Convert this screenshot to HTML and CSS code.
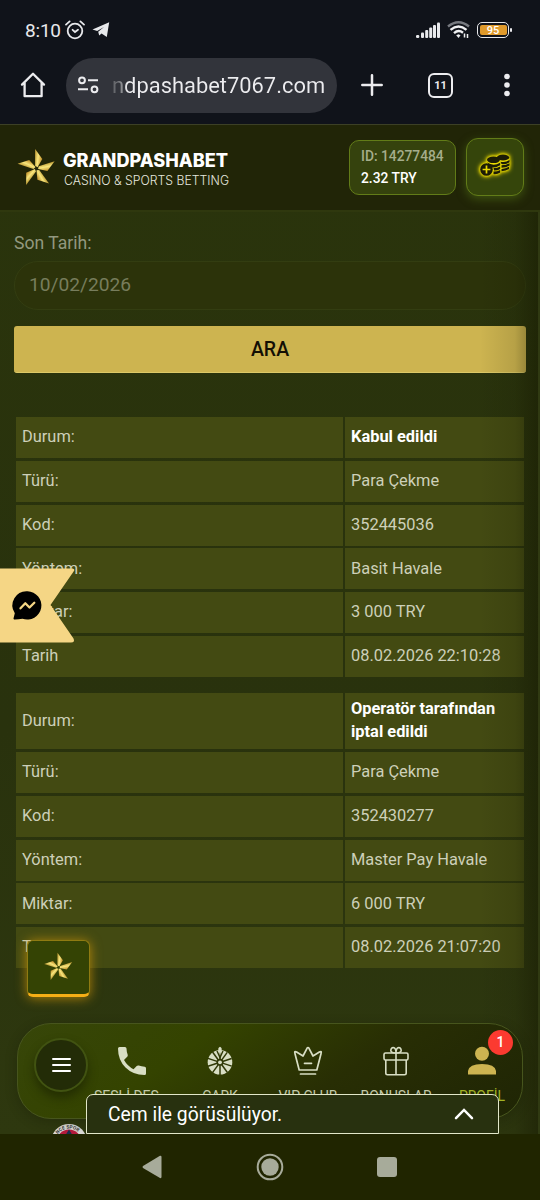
FILE: index.html
```html
<!DOCTYPE html>
<html lang="tr">
<head>
<meta charset="utf-8">
<title>Grandpashabet</title>
<link rel="stylesheet" href="styles.css">
</head>
<body>
<svg class="defs" width="0" height="0" aria-hidden="true">
  <defs>
    <linearGradient id="gold" x1="0" y1="0" x2="1" y2="0.3"><stop offset="0" stop-color="#b8952f"/><stop offset=".5" stop-color="#f8e67c"/><stop offset="1" stop-color="#c4962f"/></linearGradient>
    <path id="petal" d="M-4-57 17-28 3-4-4-8z"/>
    <symbol id="star" viewBox="-60 -60 120 120">
      <g fill="url(#gold)"><use href="#petal"/><use href="#petal" transform="rotate(72)"/><use href="#petal" transform="rotate(144)"/><use href="#petal" transform="rotate(216)"/><use href="#petal" transform="rotate(288)"/></g>
    </symbol>
  </defs>
</svg>
<div class="phone">
  <div class="status">
    <span class="clock">8:10</span>
    <svg class="alarm" width="20" height="20" viewBox="0 0 20 20" fill="none" stroke="#e8e9ec" stroke-width="1.8" stroke-linecap="round"><circle cx="10" cy="11" r="7.3"/><path d="M7.6 9.8 10 12l3-2.2M1 4.6 4.6 1.4M19 4.6l-3.6-3.2"/></svg>
    <svg class="plane" width="18" height="16" viewBox="0 0 18 16" fill="#e8e9ec"><path d="M.5 7.4 17.2.2 14.8 15 9.6 11.4 7.2 13.6 6.2 9.8 12 5.1 5.2 9z"/></svg>
    <span class="grow"></span>
    <svg width="25" height="17" viewBox="0 0 25 17" fill="#e8e9ec"><rect x="0" y="13" width="3.3" height="3" rx="1.2"/><rect x="5" y="10.5" width="3" height="5.5" rx="1"/><rect x="9.2" y="8" width="3" height="8" rx="1"/><rect x="13.2" y="5.5" width="3" height="10.5" rx="1"/><rect x="17" y="3" width="3" height="13" rx="1"/><rect x="21" y=".5" width="3" height="15.5" rx="1"/></svg>
    <svg class="wifi" width="23" height="18" viewBox="0 0 23 18" fill="none" stroke="#f0f1f3" stroke-width="2.4"><path d="M1 5.5Q11.5-3 22 5.5" stroke="#777a80"/><path d="M3.5 8.8Q11.5 2 19.5 8.8M7 12.2Q11.5 8.2 16 11.8"/><path d="M9.2 14.3 11.5 17 13.5 14.3 11.5 13.2z" fill="#f0f1f3" stroke="none"/><path d="M17.5 12.5v4M20.5 13v4" stroke-width="1.5"/></svg>
    <span class="battery"><span>95</span></span>
  </div>
  <div class="browser">
    <svg class="home" width="26" height="26" viewBox="0 0 26 26" fill="none" stroke="#ececef" stroke-width="2.3" stroke-linejoin="round" stroke-linecap="round"><path d="M2 12.6 13 1.7 24 12.6M4.6 11v13.2h17V11"/></svg>
    <div class="url">
      <svg width="21" height="18" viewBox="0 0 21 18" fill="none" stroke="#ececef" stroke-width="2"><circle cx="4" cy="4.3" r="2.9"/><circle cx="16.5" cy="13.3" r="2.9"/><path d="M10 4.3h10M0 13.3h10"/></svg>
      <span class="address">ndpashabet7067.com</span>
    </div>
    <svg class="plus" width="22" height="22" viewBox="0 0 22 22" stroke="#ececef" stroke-width="2.5" stroke-linecap="round"><path d="M11 1.3v19.4M1.3 11h19.4"/></svg>
    <span class="tabs">11</span>
    <svg class="dots" width="6" height="24" viewBox="0 0 6 24" fill="#ececef"><circle cx="3" cy="3.5" r="2.8"/><circle cx="3" cy="12" r="2.8"/><circle cx="3" cy="20.5" r="2.8"/></svg>
  </div>

  <div class="page">
    <header class="header">
      <svg class="logo-star"><use href="#star"/></svg>
      <svg class="wordmark" width="170" height="44" viewBox="0 0 170 44"><text class="brand" x="0" y="20" textLength="165" lengthAdjust="spacingAndGlyphs">GRANDPASHABET</text><text class="tagline" x="1" y="37.5" textLength="165" lengthAdjust="spacingAndGlyphs">CASINO &amp; SPORTS BETTING</text></svg>
      <div class="account"><span class="account-id">ID: 14277484</span><span>2.32 TRY</span></div>
      <div class="deposit">
        <svg width="40" height="32" viewBox="0 0 40 32">
          <g class="coins">
            <ellipse cx="29" cy="7.5" rx="6.2" ry="3"/><path d="M26.5 11.7Q31 13 35.5 10v2.3Q32 15 27.5 14zM27.5 15.3q4.5 0 8-2v2.3q-3 2.2-8 2.2zM27.5 19q4-.3 7.5-2.2v2.2q-3 2-7.5 2.3z"/>
            <ellipse cx="19.5" cy="9.8" rx="6.5" ry="3.3"/><path d="M13 12.3q6 4.5 13.2.5v2.4q-5 3-9 2zM19.5 18q4 0 6.7-1.5v2.4q-2.7 1.7-6.2 1.5zM19.5 21.6q4 0 6.7-1.5v2.4q-2.7 2-6.7 1.6z"/>
            <circle cx="12.5" cy="19.5" r="6.3"/>
          </g>
          <path d="M12.5 15.6v7.8M8.6 19.5h7.8" stroke="#e9d800" stroke-width="1.7"/>
        </svg>
      </div>
    </header>

    <main class="content">
      <label class="label">Son Tarih:</label>
      <div class="date">10/02/2026</div>
      <button class="search">ARA</button>
      <div class="record">
        <span>Durum:</span><b>Kabul edildi</b>
        <span>Türü:</span><span>Para Çekme</span>
        <span>Kod:</span><span>352445036</span>
        <span>Yöntem:</span><span>Basit Havale</span>
        <span>Miktar:</span><span>3 000 TRY</span>
        <span>Tarih</span><span>08.02.2026 22:10:28</span>
      </div>
      <div class="record second">
        <span>Durum:</span><b>Operatör tarafından iptal edildi</b>
        <span>Türü:</span><span>Para Çekme</span>
        <span>Kod:</span><span>352430277</span>
        <span>Yöntem:</span><span>Master Pay Havale</span>
        <span>Miktar:</span><span>6 000 TRY</span>
        <span>Tarih</span><span>08.02.2026 21:07:20</span>
      </div>
    </main>
    <div class="edge"></div>

    <svg class="messenger" width="76" height="75" viewBox="0 0 76 75"><path d="M0 .5H72.5Q75.5 1 73.6 3.5L50.5 37 73.5 70.5Q75.3 74.5 71 74.5H0z" fill="#f5d685"/><path d="M27.5 23.2a14.2 14.2 0 1 1-5 27.6Q18 51.5 14 51.4q-1-.6-.2-2.2l1-4A14.2 14.2 0 0 1 27.5 23.2z"/><path d="M20.5 40.3 25.3 35.3 29.5 39.5 34.3 34.8" fill="none" stroke="#f5d685" stroke-width="2.3" stroke-linecap="round" stroke-linejoin="round"/></svg>

    <div class="float"><svg><use href="#star"/></svg></div>

    <svg class="club" width="36" height="36" viewBox="0 0 36 36"><circle cx="18" cy="18" r="18" fill="#d9d9d4"/><circle cx="18" cy="18" r="12.5" fill="#b61b3c"/><path d="M14 12 18 5.5 22 12z" fill="#172e50"/><path id="ring" d="M4.500 18a13.500 13.500 0 0 1 27 0" fill="none"/><text class="club-text"><textPath href="#ring" startOffset="8">NCE SPOR</textPath></text></svg>

    <nav class="nav">
      <div class="menu"><i></i><i></i><i></i></div>
      <div class="item"><svg width="30" height="30" viewBox="0 0 30 30" fill="#d8dec4"><path d="M1 2.5Q1 1 2.5 1H8Q9.4 1 9.5 2.5 9.6 6 10.7 8.7 11 10 10.2 10.8L7 14.1Q10.7 20.5 16.5 23.2L19.7 20Q20.5 19.3 21.7 19.6 24.5 20.6 27.7 20.7 29 20.8 29 22.2V27.5Q29 29 27.5 29 16 29 8.5 21.5 1 14 1 2.5z"/></svg><span>SESLİ DES...</span></div>
      <div class="item"><svg width="30" height="30" viewBox="0 0 30 30"><circle cx="15" cy="16.3" r="12.3" fill="#d8dec4"/><g stroke="#303907" stroke-width="1.5"><path d="M15 4v25"/><path d="M15 4v25" transform="rotate(36 15 16.3)"/><path d="M15 4v25" transform="rotate(72 15 16.3)"/><path d="M15 4v25" transform="rotate(108 15 16.3)"/><path d="M15 4v25" transform="rotate(144 15 16.3)"/></g><circle cx="15" cy="16.3" r="3.5" fill="#303907"/><circle cx="15" cy="16.3" r="1.9" fill="#d8dec4"/><path d="M12 5 15 11.500 18 5" fill="none" stroke="#303907" stroke-width="1.4"/><path d="M15 .7q2.500 1 1.400 4L15 9.500 13.600 4.700q-1.100-3 1.400-4z" fill="#d8dec4"/></svg><span>ÇARK</span></div>
      <div class="item"><svg width="30" height="30" viewBox="0 0 30 30" fill="none" stroke="#d8dec4" stroke-width="1.7" stroke-linejoin="round" stroke-linecap="round"><path d="M6.200 24 2 7.700Q1 4.500 3.600 6L10 10 14 2.300Q15 .7 16 2.300L20 10 26.400 6Q29 4.500 28 7.700L23.800 24zM11.500 17.300h7M7.500 28h15"/></svg><span>VIP CLUB</span></div>
      <div class="item"><svg width="30" height="30" viewBox="0 0 30 30" fill="none" stroke="#d8dec4" stroke-width="1.6"><rect x="3" y="7" width="24" height="7" rx="1.5"/><path d="M4.800 14v13q0 1.700 1.700 1.700h17q1.700 0 1.700-1.700V14M15 7v21.500M15 7Q10 7 9.800 4.500 10 1 13 1.700 15 2.500 15 7 15 2.500 17 1.700 20 1 20.200 4.500 20 7 15 7"/></svg><span>BONUSLAR</span></div>
      <div class="item active"><svg width="30" height="30" viewBox="0 0 30 30" fill="#cdb451"><circle cx="15" cy="7.7" r="7"/><path d="M1 28.500V25Q2 18 15 18T29 25v3.500z"/></svg><span>PROFİL</span><em class="badge">1</em></div>
    </nav>

    <div class="chat"><span>Cem ile görüsülüyor.</span><svg width="20" height="12" viewBox="0 0 20 12" fill="none" stroke="#fff" stroke-width="2.5" stroke-linecap="round"><path d="M2 10.2 10 2 18 10.2"/></svg></div>
  </div>

  <div class="system">
    <svg width="20" height="24" viewBox="0 0 20 24" fill="#a7ab9a"><path d="M1 11 18 .8Q19.500.5 19.500 2v20q0 1.500-1.500 1L1 13Q0 12 1 11z"/></svg>
    <svg width="28" height="28" viewBox="0 0 28 28"><circle cx="14" cy="14" r="12.3" fill="none" stroke="#a7ab9a" stroke-width="2"/><circle cx="14" cy="14" r="8.7" fill="#a7ab9a"/></svg>
    <i class="square"></i>
  </div>
</div>
</body>
</html>
```

FILE: styles.css
```css
* { box-sizing: border-box; }
body { margin: 0; font-family: Roboto, "Liberation Sans", sans-serif; }
svg { display: block; flex: none; }
.defs { position: absolute; }
.phone { width: 540px; height: 1200px; display: flex; flex-direction: column; overflow: hidden; background: #10131a; }

.status { height: 62px; display: flex; align-items: center; padding: 0 31px 2px 25px; color: #e8e9ec; }
.clock { font-size: 19px; letter-spacing: -.2px; width: 40px; }
.plane { margin-left: 7px; }
.grow { flex: 1; }
.wifi { margin: 0 7px 0 6px; }
.battery { position: relative; width: 32px; height: 16px; border: 1.5px solid #e8e9ec; border-radius: 5px; padding: 1.5px; }
.battery span { display: block; height: 10px; background: #e09a2b; border-radius: 2px; font-size: 11px; line-height: 11px; font-weight: 500; text-align: center; color: #fff; }
.battery::after { content: ""; position: absolute; right: -4px; top: 4.5px; width: 2px; height: 4px; background: #e8e9ec; border-radius: 1px; }

.browser { height: 62px; display: flex; align-items: center; padding: 0 30px 16px 20px; }
.url { width: 271px; height: 55px; margin-left: 20px; border-radius: 28px; background: #32343b; display: flex; align-items: center; padding-left: 12px; flex: none; }
.address { margin-left: 13px; font-size: 21.9px; white-space: nowrap; background: linear-gradient(90deg, #5a5c61 0, #8d8e92 10px, #ececef 15px); background-clip: text; -webkit-background-clip: text; color: transparent; }
.plus { margin-left: 24px; }
.tabs { width: 25px; height: 25px; margin-left: 45px; border: 2.3px solid #ececef; border-radius: 6px; color: #ececef; font-size: 11px; font-weight: 700; line-height: 21px; text-align: center; }
.dots { margin-left: 51px; }

.page { position: relative; height: 1010px; background: linear-gradient(#2a340c, #29320d 60%, #2e380f); border-top: 1px solid #3c4026; overflow: hidden; }
.header { height: 87px; display: flex; align-items: center; padding: 0 16px 1px 16px; background: #212507; border-bottom: 2px solid #2f380e; }
.logo-star { width: 41px; height: 41px; margin-top: 2px; }
.wordmark { margin-left: 5.5px; margin-top: 4px; }
.brand { font: 800 18.5px Inter, sans-serif; fill: #fff; }
.tagline { font: 300 12.5px Inter, sans-serif; fill: #e5e7df; }
.account { margin-left: auto; width: 107px; height: 55px; border: 1px solid #627c18; border-radius: 10px; background: #35420d; display: flex; flex-direction: column; padding: 4px 0 0 11px; font-size: 13.8px; line-height: 22px; font-weight: 500; color: #fff; }
.account-id { color: #a5ad8b; }
.deposit { width: 58px; height: 58px; margin-left: 10px; border: 1px solid #627c18; border-radius: 12px; background: #35450b; box-shadow: 0 3px 10px #3e5210; display: flex; align-items: center; justify-content: center; padding: 0 3px 2px 0; }
.coins { fill: #1c1c06; filter: drop-shadow(0 0 1px #f0e000) drop-shadow(0 0 1.5px #e8d800) drop-shadow(0 0 2px #c8b800); }

.content { padding: 19px 14px 0; }
.label { display: block; height: 30px; line-height: 24px; font-size: 17.6px; color: #92987f; }
.date { height: 49px; border: 1px solid #333d11; border-radius: 24px; background: #2c330a; padding-left: 14px; line-height: 45px; font-size: 19.2px; color: #777d5c; }
.search { display: block; width: 100%; height: 47px; margin: 16px 0 44px; border: 0; border-bottom: 1px solid #dcc867; border-radius: 3px; background: #cdb450; font: 500 19.5px/47px Roboto, sans-serif; color: #130f04; padding: 0; }
.record { display: grid; grid-template-columns: 326.5px 179px; gap: 2.75px 2.5px; margin: 0 0 16.2px 2px; grid-auto-rows: 41px; }
.second { grid-template-rows: 56.5px; }
.record > * { background: #434a12; display: flex; align-items: center; padding: 0 6px 1.5px; font-size: 16.4px; line-height: 23px; color: #cdd0b9; }
.record > b { color: #fff; }
.edge { position: absolute; top: 87px; right: 0; bottom: 0; width: 60px; background: linear-gradient(90deg, transparent, rgba(20, 22, 0, .12) 60%, rgba(20, 22, 0, .45)); border-right: 2px solid #303a12; }

.messenger { position: absolute; left: 0; top: 443px; }
.float { position: absolute; left: 27px; top: 815px; width: 63px; height: 57px; border: 1px solid #8f7b12; border-bottom: 3px solid #f5ae16; border-radius: 6px; background: #344304; box-shadow: 0 1px 12px rgba(216, 154, 10, .75); display: flex; align-items: center; justify-content: center; }
.float svg { width: 31px; height: 31px; }
.club { position: absolute; left: 51px; top: 999px; }
.club-text { font: 700 4.8px Roboto, sans-serif; fill: #333; }

.nav { position: absolute; left: 17px; top: 898px; width: 506px; height: 96px; display: grid; grid-template-columns: 70px 88px 88px 88px 88px 84px; border: 1px solid #47551d; border-radius: 34px; background: linear-gradient(145deg, #374609 0, #344300 32%, #282e04 62%, #1f2505 100%); box-shadow: 0 3px 12px rgba(20, 24, 2, .3); }
.menu { width: 54px; height: 54px; margin: 14px 0 0 16px; border: 2px solid #415311; border-radius: 50%; background: #232c07; box-shadow: 0 6px 10px rgba(20, 25, 0, .5); display: flex; flex-direction: column; align-items: center; justify-content: center; gap: 3.5px; }
.menu i { width: 19px; height: 2.3px; border-radius: 1px; background: #fff; }
.item { position: relative; display: flex; flex-direction: column; align-items: center; padding-top: 22px; color: #c1c8a9; }
.item span { margin-top: 10.5px; font-size: 14px; line-height: 19px; white-space: nowrap; }
.active { color: #a3b324; }
.badge { position: absolute; left: 48px; top: 6px; width: 25px; height: 25px; border-radius: 50%; background: #fb3a30; color: #fff; font: 500 14px/25px Roboto, sans-serif; text-align: center; }

.chat { position: absolute; left: 86px; top: 969px; width: 413px; height: 40px; border: 1px solid #e2e7c9; border-radius: 7px 7px 0 0; background: #28310f; display: flex; align-items: center; justify-content: space-between; padding: 0 24px 0 21px; font-size: 19.3px; color: #fff; }

.system { height: 66px; background: #202500; display: grid; grid-template-columns: 117.5px 117.5px 117.5px; justify-content: center; justify-items: center; align-items: center; padding-right: 1px; }
.square { width: 20px; height: 20px; border-radius: 3px; background: #a7ab9a; }
```
